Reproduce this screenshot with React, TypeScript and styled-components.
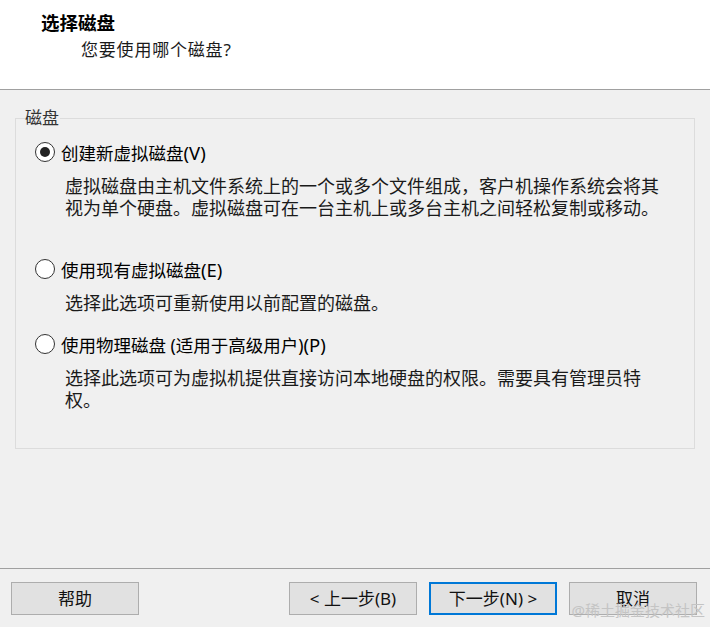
import styled, { createGlobalStyle } from 'styled-components';

const UI_FONT = `"Noto Sans", "Noto Sans CJK SC", sans-serif`;

const GlobalStyle = createGlobalStyle`
  html, body {
    margin: 0;
    padding: 0;
    background: #f0f0f0;
  }
  * {
    box-sizing: border-box;
  }
`;

const StyledDialog = styled.div`
  width: 710px;
  height: 627px;
  display: flex;
  flex-direction: column;
  background: #f0f0f0;
  font-family: ${UI_FONT};
  color: #000;
  overflow: hidden;
  position: relative;
`;

const StyledHeader = styled.header`
  height: 90px;
  flex-shrink: 0;
  background: #fff;
  border-bottom: 1px solid #a0a0a0;
  padding: 11px 0 0 41px;
`;

const StyledTitle = styled.div`
  font-size: 18.5px;
  font-weight: 700;
  line-height: 24px;
  color: #000;
`;

const StyledSubtitle = styled.div`
  margin: 3px 0 0 40px;
  font-size: 17px;
  letter-spacing: 0.8px;
  line-height: 24px;
  color: #1a1a1a;
`;

const StyledBody = styled.main`
  flex: 1;
  padding: 18px 15px 0;
`;

const StyledGroup = styled.fieldset`
  margin: 0;
  padding: 13px 0 0 0;
  height: 341px;
  border: 1px solid #dcdcdc;
  min-width: 0;
`;

const StyledLegend = styled.legend`
  margin-left: 9px;
  padding: 0 1px 0 0;
  font-size: 17px;
  line-height: 20px;
  color: #333;
`;

const StyledOption = styled.div<{ $gap: number }>`
  margin-top: ${({ $gap }) => $gap}px;
  padding-left: 19px;
`;

const StyledRadioRow = styled.label`
  display: flex;
  align-items: center;
  gap: 6px;
  height: 24px;
  font-size: 17.5px;
  line-height: 24px;
  cursor: pointer;
`;

const StyledAccessKey = styled.span`
  font-size: 18.5px;
`;

const StyledRadio = styled.span<{ $checked?: boolean }>`
  width: 20px;
  height: 20px;
  flex-shrink: 0;
  margin-top: -2px;
  border: 1.5px solid #333;
  border-radius: 50%;
  background: #fff;
  display: flex;
  align-items: center;
  justify-content: center;

  &::after {
    content: '';
    width: 10px;
    height: 10px;
    border-radius: 50%;
    background: #222;
    display: ${({ $checked }) => ($checked ? 'block' : 'none')};
  }
`;

const StyledDescription = styled.p`
  margin: 10px 0 0 30px;
  font-size: 18px;
  line-height: 22px;
  color: #1a1a1a;
  white-space: nowrap;
`;

const StyledFooter = styled.footer`
  height: 59px;
  flex-shrink: 0;
  border-top: 1px solid #a0a0a0;
  padding: 13px 13px 0 11px;
  display: flex;
  align-items: flex-start;
  gap: 12px;
`;

const StyledButton = styled.button<{ $primary?: boolean; $push?: boolean }>`
  width: 128px;
  height: 33px;
  margin-left: ${({ $push }) => ($push ? 'auto' : '0')};
  background: #e1e1e1;
  border: ${({ $primary }) => ($primary ? '2px solid #0078d7' : '1px solid #adadad')};
  font-family: ${UI_FONT};
  font-size: 17px;
  color: #111;
  padding: 0;
  line-height: 30px;
  cursor: pointer;
`;

const StyledWatermark = styled.div`
  position: absolute;
  right: 5px;
  bottom: 8px;
  font-family: ${UI_FONT};
  font-size: 15px;
  line-height: 18px;
  color: #c4c4c4;
  pointer-events: none;
`;

export default function App() {
  return (
    <>
      <GlobalStyle />
      <StyledDialog>
        <StyledHeader>
          <StyledTitle>选择磁盘</StyledTitle>
          <StyledSubtitle>您要使用哪个磁盘?</StyledSubtitle>
        </StyledHeader>
        <StyledBody>
          <StyledGroup>
            <StyledLegend>磁盘</StyledLegend>
            <StyledOption $gap={0}>
              <StyledRadioRow>
                <StyledRadio $checked />
                <span>
                  创建新虚拟磁盘<StyledAccessKey>(V)</StyledAccessKey>
                </span>
              </StyledRadioRow>
              <StyledDescription>
                虚拟磁盘由主机文件系统上的一个或多个文件组成，客户机操作系统会将其
                <br />
                视为单个硬盘。虚拟磁盘可在一台主机上或多台主机之间轻松复制或移动。
              </StyledDescription>
            </StyledOption>
            <StyledOption $gap={39}>
              <StyledRadioRow>
                <StyledRadio />
                <span>
                  使用现有虚拟磁盘<StyledAccessKey>(E)</StyledAccessKey>
                </span>
              </StyledRadioRow>
              <StyledDescription>选择此选项可重新使用以前配置的磁盘。</StyledDescription>
            </StyledOption>
            <StyledOption $gap={19}>
              <StyledRadioRow>
                <StyledRadio />
                <span>
                  使用物理磁盘 (适用于高级用户)<StyledAccessKey>(P)</StyledAccessKey>
                </span>
              </StyledRadioRow>
              <StyledDescription>
                选择此选项可为虚拟机提供直接访问本地硬盘的权限。需要具有管理员特
                <br />
                权。
              </StyledDescription>
            </StyledOption>
          </StyledGroup>
        </StyledBody>
        <StyledFooter>
          <StyledButton>帮助</StyledButton>
          <StyledButton $push>&lt; 上一步(B)</StyledButton>
          <StyledButton $primary>下一步(N) &gt;</StyledButton>
          <StyledButton>取消</StyledButton>
        </StyledFooter>
        <StyledWatermark>@稀土掘金技术社区</StyledWatermark>
      </StyledDialog>
    </>
  );
}
